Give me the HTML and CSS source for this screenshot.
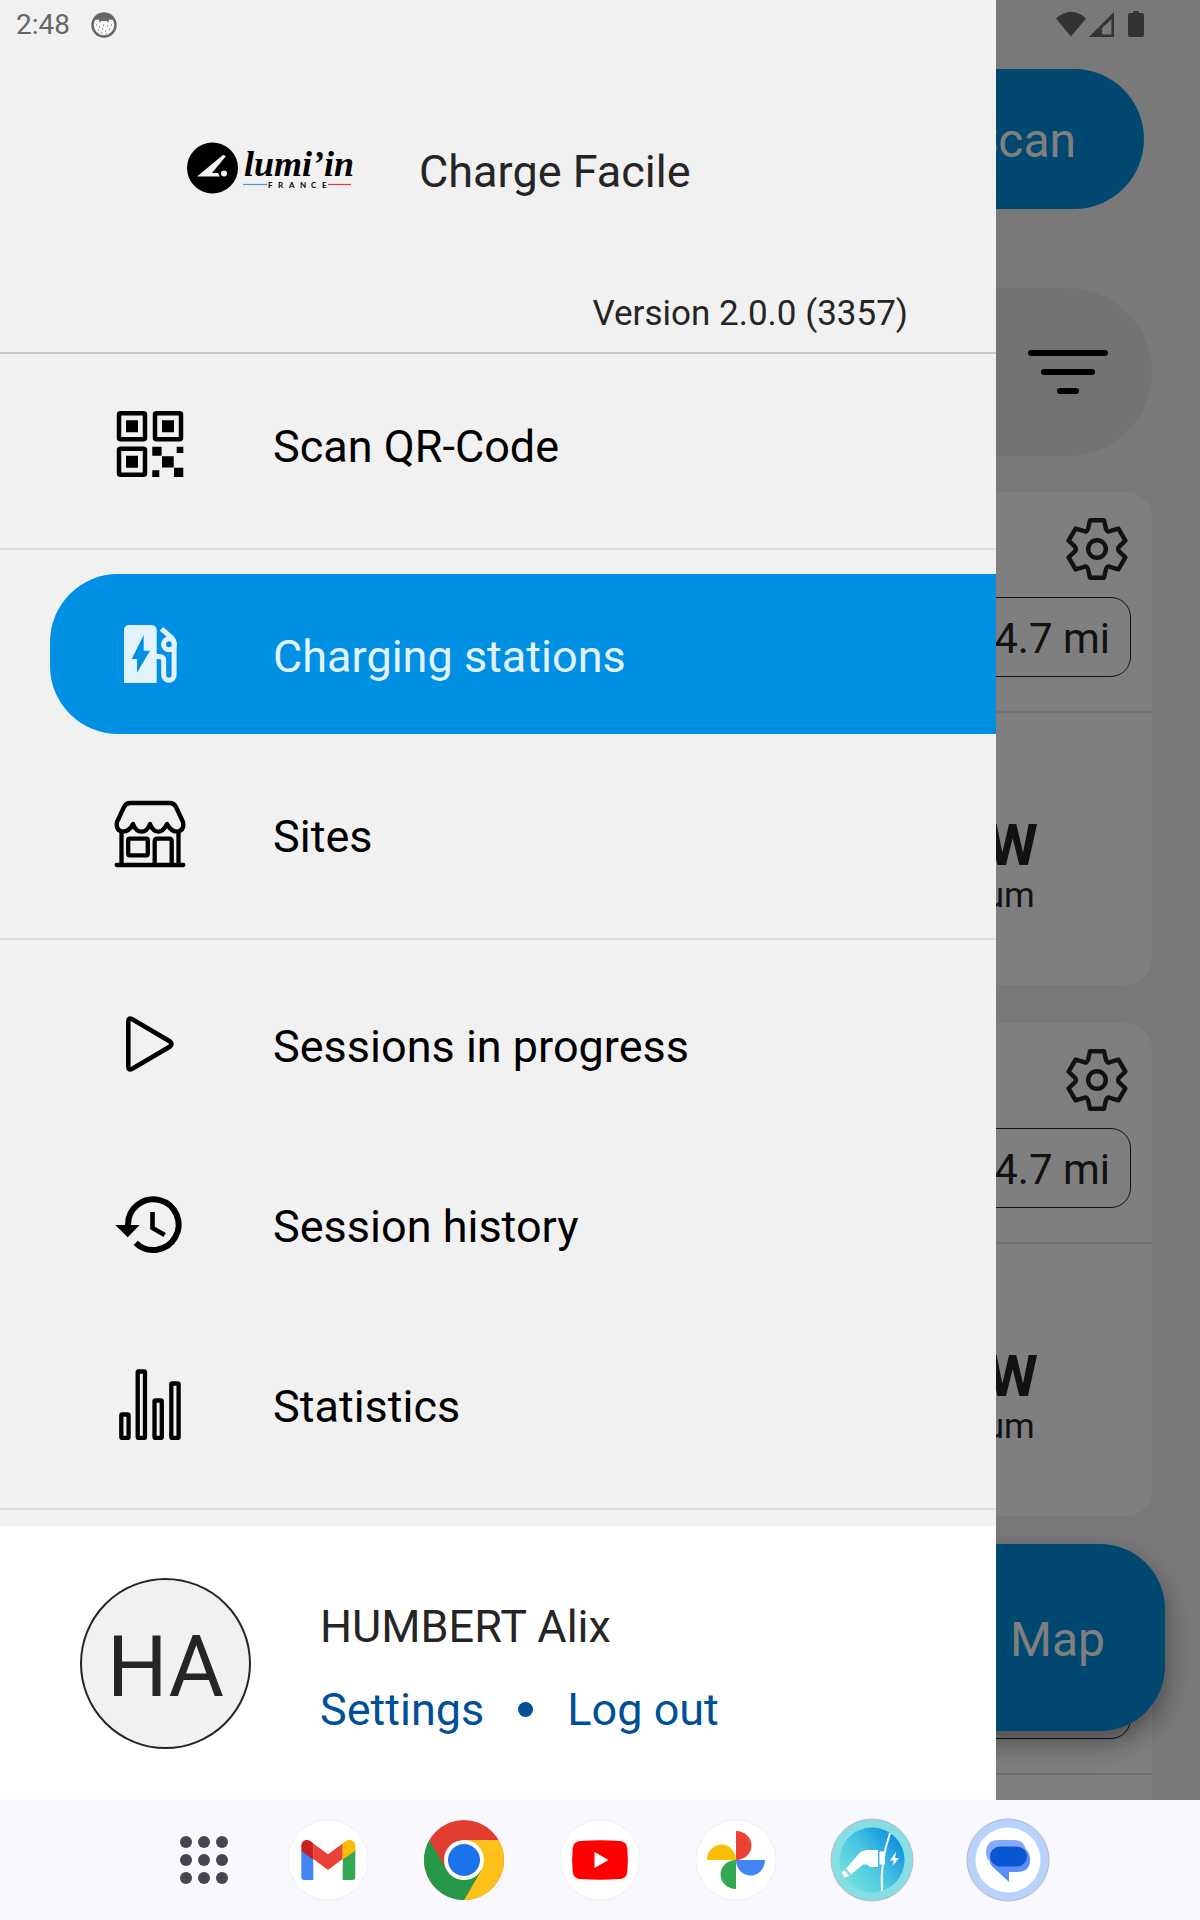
FILE: index.html
```html
<!DOCTYPE html>
<html lang="en">
<head>
  <meta charset="UTF-8">
  <meta name="viewport" content="width=device-width, initial-scale=1.0">
  <title>Charge Facile</title>
  <link rel="stylesheet" href="styles.css">
</head>
<body>

  <!-- shared shapes -->
  <svg class="defs" aria-hidden="true">
    <symbol id="gear" viewBox="-31 -31 62 62">
      <path d="M-7-28.7H7L9-20Q10.5-16.5 12.8-17.8L21.4-20.4 28.4-8.3 21.8-2.2Q20.5 0 21.8 2.2L28.4 8.3 21.4 20.4 12.8 17.8Q10.5 16.5 9 20L7 28.7H-7L-9 20Q-10.5 16.5-12.8 17.8L-21.4 20.4-28.4 8.3-21.8 2.2Q-20.5 0-21.8-2.2L-28.4-8.3-21.4-20.4-12.8-17.8Q-10.5-16.5-9-20Z" fill="none" stroke="currentColor" stroke-width="4.4" stroke-linejoin="round"/>
      <circle r="8.800" fill="none" stroke="currentColor" stroke-width="4.4"/>
    </symbol>
  </svg>

  <div class="screen">

    <main class="page">
      <button class="scan-button">Scan</button>

      <div class="search">
        <button class="filter" aria-label="Filter">
          <svg width="80" height="44" viewBox="0 0 80 44" stroke="#000" stroke-width="6" stroke-linecap="round">
            <path d="M3 3H77M16 22H64M32 41H48"/>
          </svg>
        </button>
      </div>

      <div class="cards">
        <article class="card">
          <div class="card-head">
            <svg class="gear" width="62" height="62"><use href="#gear"/></svg>
            <span class="distance">4.7 mi</span>
          </div>
          <div class="card-body">
            <div class="power"><strong>22 kW</strong><span>Maximum</span></div>
          </div>
        </article>
        <article class="card">
          <div class="card-head">
            <svg class="gear" width="62" height="62"><use href="#gear"/></svg>
            <span class="distance">4.7 mi</span>
          </div>
          <div class="card-body">
            <div class="power"><strong>22 kW</strong><span>Maximum</span></div>
          </div>
        </article>
        <article class="card">
          <div class="card-head">
            <svg class="gear" width="62" height="62"><use href="#gear"/></svg>
            <span class="distance">4.7 mi</span>
          </div>
          <div class="card-body"></div>
        </article>
      </div>

      <button class="map-button">Map</button>
    </main>

    <div class="scrim"></div>

    <aside class="drawer">
      <header class="drawer-header">
        <div class="brand">
          <svg class="logo" width="168" height="52" viewBox="0 0 168 52" role="img" aria-label="lumi'in France">
            <circle cx="25.500" cy="26" r="25.500"/>
            <path d="M36 13 10 34.500H33L31 31H25L39 14Z" fill="#f2f2f2"/>
            <circle cx="37" cy="31.500" r="3" fill="#f2f2f2"/>
            <text x="57" y="34" class="logo-name">lumi’in</text>
            <path d="M56 42.500H80" stroke="#3d9be0" stroke-width="1.200"/>
            <path d="M141 42.500H164" stroke="#e23b3b" stroke-width="1.200"/>
            <text x="81 91 102 113 124 135" y="45.500" class="logo-country">FRANCE</text>
          </svg>
          <h1>Charge Facile</h1>
        </div>
        <p class="version">Version 2.0.0 (3357)</p>
      </header>

      <nav class="menu">
        <div class="group">
          <a class="item" href="#scan">
            <svg viewBox="0 0 72 72">
              <g fill="none" stroke="currentColor" stroke-width="4.500" stroke-linejoin="round">
                <rect x="5" y="5.200" width="26" height="26" rx="1.500"/>
                <rect x="41" y="5.200" width="26" height="26" rx="1.500"/>
                <rect x="5" y="40.800" width="26" height="26" rx="1.500"/>
              </g>
              <path fill="currentColor" d="M12 12.200h12v12H12zM48 12.200h12v12H48zM12 47.800h12v12H12zM38.300 38.700h9.300v9h-9.300zM62.700 38.700h6.600v6.300h-6.600zM48 48.300h11.700v11.300H48zM38.300 62.300h7V69h-7zM60 59.700h9.300V69H60z"/>
            </svg>
            <span>Scan QR-Code</span>
          </a>
        </div>

        <div class="group">
          <a class="item active" href="#stations">
            <svg viewBox="0 0 72 72">
              <path fill="currentColor" fill-rule="evenodd" d="M10 65V12.500Q10 7 15.500 7H37Q42.700 7 42.700 12.500V65ZM29.700 17 17.700 41H23V54.700L36 32.700H29.700Z"/>
              <g fill="none" stroke="currentColor" stroke-width="5">
                <path d="M42 38.500H45.500Q49.700 38.500 49.700 42.500V57a5.200 5.200 0 0 0 10.400 0V26Q60 22 57.500 19.500L47.500 10.800"/>
                <circle cx="55" cy="26.300" r="5.500"/>
              </g>
            </svg>
            <span>Charging stations</span>
          </a>
          <a class="item" href="#sites">
            <svg viewBox="0 0 72 72" fill="none" stroke="currentColor" stroke-width="4.300" stroke-linecap="round" stroke-linejoin="round">
              <path d="M16 5H56Q60 5 62 9L69 24Q70.500 32 64 33.500 57 34 53 26 49 33.700 44.500 33.700 39 33.700 36 26 33 33.700 27.500 33.700 22 33.700 19 26 15 34 8 33.500 1.500 32 3 24L10 9Q12 5 16 5Z"/>
              <path d="M7.500 34V66M64.500 34V66M2.700 67H69.300M40.700 66V43.500Q40.700 40.700 43.500 40.700H55Q57.700 40.700 57.700 43.500V66"/>
              <rect x="14.200" y="40.700" width="19.600" height="16.600" rx="1.500"/>
            </svg>
            <span>Sites</span>
          </a>
        </div>

        <div class="group">
          <a class="item" href="#in-progress">
            <svg viewBox="0 0 72 72" fill="none" stroke="currentColor" stroke-width="4.600">
              <path d="M14.300 13.500V58.500Q14.300 63 18.300 60.700L56 38.500Q59 36 56 33.500L18.300 11.300Q14.300 9 14.300 13.500Z"/>
            </svg>
            <span>Sessions in progress</span>
          </a>
          <a class="item" href="#history">
            <svg viewBox="0 0 72 72" fill="none" stroke="currentColor">
              <path stroke-width="6" d="M14 38V36.700A25.300 25.300 0 1 1 21.700 54.800"/>
              <path stroke-width="4.600" d="M38.500 24V40L50.700 47"/>
              <path fill="currentColor" stroke="none" d="M1.300 37H25.700L13.700 49.300Z"/>
            </svg>
            <span>Session history</span>
          </a>
          <a class="item" href="#statistics">
            <svg viewBox="0 0 72 72" fill="none" stroke="currentColor" stroke-width="4.300">
              <rect x="7.300" y="46.500" width="7.300" height="23.500" rx="1"/>
              <rect x="23.700" y="3.500" width="7.300" height="66.500" rx="1"/>
              <rect x="40.500" y="32.500" width="7.300" height="37.500" rx="1"/>
              <rect x="57.300" y="15.500" width="7.300" height="54.500" rx="1"/>
            </svg>
            <span>Statistics</span>
          </a>
        </div>
      </nav>

      <footer class="account">
        <div class="avatar">HA</div>
        <div class="account-info">
          <p>HUMBERT Alix</p>
          <div class="account-links">
            <a href="#settings">Settings</a>
            <span class="dot"></span>
            <a href="#logout">Log out</a>
          </div>
        </div>
      </footer>
    </aside>

    <div class="status-bar">
      <span>2:48</span>
      <svg width="26" height="26" viewBox="0 0 26 26">
        <circle cx="13" cy="13" r="11.500" fill="#f5f5f5" stroke="#666" stroke-width="2.400"/>
        <path d="M3 8Q7 1 13 1T23 8L18 7.500 17.500 10.500 15.500 9H10.500L8.500 10.500 8 7.500Z" fill="#666"/>
        <path d="M5 13h1M8 15h1M12 13h1M16 14h1M20 13h1M7 18h1M11 17h1M14 19h1M18 17h1M10 21h1M15 22h1" stroke="#666"/>
      </svg>
      <svg class="signals" width="88" height="28" viewBox="0 0 88 28" fill="#333">
        <path d="M0 7.500Q15-6 30 7.500L15 25.500Z"/>
        <path fill-rule="evenodd" d="M33 26 58 1V26ZM46 23.500H55.500V8L46 17Z"/>
        <path d="M77 0H83V2H86Q88 2 88 4V24Q88 26 86 26H74Q72 26 72 24V4Q72 2 74 2H77Z"/>
      </svg>
    </div>
  </div>

  <nav class="taskbar">
    <button class="apps" aria-label="All apps">
      <svg width="48" height="48" viewBox="0 0 48 48" fill="#46464f">
        <circle cx="6" cy="6" r="6"/><circle cx="24" cy="6" r="6"/><circle cx="42" cy="6" r="6"/>
        <circle cx="6" cy="24" r="6"/><circle cx="24" cy="24" r="6"/><circle cx="42" cy="24" r="6"/>
        <circle cx="6" cy="42" r="6"/><circle cx="24" cy="42" r="6"/><circle cx="42" cy="42" r="6"/>
      </svg>
    </button>
    <button aria-label="Gmail">
      <svg viewBox="-42 -42 84 84">
        <circle r="40" fill="#fff" stroke="#f0eef5"/>
        <path d="M-26.700-10-14.700-2V20H-23.500Q-26.700 20-26.700 17Z" fill="#4285f4"/>
        <path d="M27.300-10 14.700-2V20H24Q27.300 20 27.300 17Z" fill="#34a853"/>
        <path d="M-14.700-16.500 0-5.700 14.700-16.500V-1L0 10-14.700-1Z" fill="#ea4335"/>
        <path d="M-14.700-16.500V-.500L-26.700-9.300V-14C-26.700-20-20-22.500-14.700-16.500Z" fill="#c5221f"/>
        <path d="M14.700-16.500V-.500L27.300-9.300V-14C27.300-20 20-22.500 14.700-16.500Z" fill="#fbbc04"/>
      </svg>
    </button>
    <button aria-label="Chrome">
      <svg viewBox="-42 -42 84 84">
        <circle r="40" fill="#e03c31"/>
        <path d="M0-20H34.600A40 40 0 0 1 0 40L17.300 10Z" fill="#fcc21b"/>
        <path d="M-34.600-20-17.300 10 0 20 17.300 10 0 40A40 40 0 0 1-34.600-20Z" fill="#279847"/>
        <circle r="20" fill="#fff"/>
        <circle r="16" fill="#1a73e8"/>
      </svg>
    </button>
    <button aria-label="YouTube">
      <svg viewBox="-42 -42 84 84">
        <circle r="40" fill="#fff" stroke="#f0eef5"/>
        <path d="M-20-19Q0-20.500 20-19 26.500-18.500 27.300-12 28.500 0 27.300 12 26.500 18.500 20 19 0 20.500-20 19-26.500 18.500-27.300 12-28.500 0-27.300-12-26.500-18.500-20-19Z" fill="#f00"/>
        <path d="M-5.500-8V8L8.500 0Z" fill="#fff"/>
      </svg>
    </button>
    <button aria-label="Photos">
      <svg viewBox="-42 -42 84 84">
        <circle r="40" fill="#fff" stroke="#f0eef5"/>
        <path d="M0-29C9-29 15.500-22 15.500-14.500S9 0 0 0Z" fill="#ea4335"/>
        <path d="M0-29C9-29 15.500-22 15.500-14.500S9 0 0 0Z" fill="#4285f4" transform="rotate(90)"/>
        <path d="M0-29C9-29 15.500-22 15.500-14.500S9 0 0 0Z" fill="#34a853" transform="rotate(180)"/>
        <path d="M0-29C9-29 15.500-22 15.500-14.500S9 0 0 0Z" fill="#fbbc04" transform="rotate(270)"/>
      </svg>
    </button>
    <button aria-label="Charge Facile">
      <svg viewBox="-42 -42 84 84">
        <defs>
          <linearGradient id="sky" x1="0.100" y1="0.800" x2="0.900" y2="0.150">
            <stop offset="0" stop-color="#6fe0dc"/>
            <stop offset="0.500" stop-color="#45c3e2"/>
            <stop offset="1" stop-color="#0b8fe0"/>
          </linearGradient>
        </defs>
        <circle r="41" fill="#87dde4" stroke="#b9b9c4"/>
        <circle r="32.500" fill="url(#sky)"/>
        <path d="M18-27Q8 2 10 31" fill="none" stroke="#fff" stroke-width="2"/>
        <path d="M-26 8.500-12-7.500Q-9-10-5-10H6V7H-2L-5 4.500H-9L-21 14.500ZM7.500-8.500H13V4.500H7.500ZM-27.500 10-22.500 16-28 17.500-30 12Z" fill="#fff"/>
        <path d="M24-8 18 .500H22L20.500 6 27-2H23Z" fill="#fff"/>
      </svg>
    </button>
    <button aria-label="Messages">
      <svg viewBox="-42 -42 84 84">
        <circle r="41" fill="#b7d3fb" stroke="#b9b9c4"/>
        <circle r="32.500" fill="#fff"/>
        <path d="M-9-20H6Q16-20 18-10L-15 4Q-22 0-22-7-22-20-9-20Z" fill="#87a9fb"/>
        <path d="M-18 1Q-17-13-5-13H8Q22-13 22 0 22 12 9 12H1V22L-14 8Q-18 5-18 1Z" fill="#5c8df8"/>
        <rect x="-18" y="-13.500" width="37" height="20" rx="10" fill="#0957d0"/>
      </svg>
    </button>
  </nav>

</body>
</html>
```
FILE: styles.css
```css
* {
  box-sizing: border-box;
}

body {
  margin: 0;
  height: 100vh;
  display: flex;
  flex-direction: column;
  overflow: hidden;
  font-family: Roboto, sans-serif;
  font-size: 45px;
  line-height: 52px;
  color: #252525;
}

h1, p {
  margin: 0;
  font-size: inherit;
  font-weight: 400;
}

a {
  text-decoration: none;
}

button {
  border: none;
  padding: 0;
  background: none;
  font: inherit;
  cursor: pointer;
}

svg {
  display: block;
  flex: none;
}

.defs {
  position: absolute;
  width: 0;
  height: 0;
}

.screen {
  position: relative;
  flex: 1;
  min-height: 0;
  overflow: hidden;
}

/* page behind the drawer */
.page {
  height: 100%;
  padding: 69px 48px 0;
  background: #f2f2f2;
  display: flex;
  flex-direction: column;
}

.scan-button {
  align-self: flex-end;
  flex: none;
  height: 140px;
  margin-right: 8px;
  padding: 4px 68px 0 140px;
  border-radius: 70px;
  background: #0090df;
  color: #fff;
  font-size: 48px;
}

.search {
  flex: none;
  height: 168px;
  margin: 79px 0 36px;
  padding: 0 44px;
  border-radius: 84px;
  background: #e6e6e6;
  display: flex;
  align-items: center;
  justify-content: flex-end;
}

.cards {
  display: flex;
  flex-direction: column;
  gap: 38px;
}

.card {
  border-radius: 26px;
  background: #fff;
}

.card-head {
  display: flex;
  flex-direction: column;
  align-items: flex-end;
  gap: 17px;
  padding: 26px 21px 34px;
  border-bottom: 2px solid #e0e0e0;
}

.gear {
  margin-right: 3px;
}

.distance {
  padding: 15px 20px 11px;
  border: 1px solid #252525;
  border-radius: 20px;
  font-size: 42px;
}

.card-body {
  height: 272px;
  padding: 32px 114px 0;
  display: flex;
  align-items: center;
  justify-content: flex-end;
}

.power {
  display: flex;
  flex-direction: column;
  align-items: center;
  font-size: 35px;
  line-height: 40px;
}

.power strong {
  font-size: 58px;
  line-height: 62px;
}

.map-button {
  position: absolute;
  right: 35px;
  bottom: 69px;
  height: 187px;
  padding: 4px 60px 0 140px;
  border-radius: 65px;
  background: #0090df;
  color: #fff;
  font-size: 48px;
  box-shadow: 0 12px 28px rgba(0, 0, 0, 0.4);
}

.scrim {
  position: absolute;
  inset: 0;
  background: rgba(0, 0, 0, 0.5);
}

/* drawer */
.drawer {
  position: absolute;
  top: 0;
  bottom: 0;
  left: 0;
  width: 83%;
  background: #f1f1f1;
  display: flex;
  flex-direction: column;
}

.drawer-header {
  padding: 142px 88px 12px 187px;
  border-bottom: 2px solid #c8c8c8;
}

.brand {
  display: flex;
  align-items: center;
  gap: 64px;
}

.brand h1 {
  padding-top: 4px;
  margin-bottom: -4px;
}

.logo {
  overflow: visible;
}

.logo-name {
  font: italic bold 36px "Liberation Serif", serif;
}

.logo-country {
  font: bold 8px Lato, sans-serif;
}

.version {
  margin-top: 94px;
  text-align: right;
  font-size: 35px;
}

.menu {
  flex: 1;
  min-height: 0;
}

.group {
  display: flex;
  flex-direction: column;
  gap: 20px;
  padding: 24px 0;
  border-bottom: 2px solid #dedede;
}

.group:first-child {
  padding-top: 10px;
}

.item {
  display: flex;
  align-items: center;
  gap: 87px;
  height: 160px;
  margin-left: 50px;
  padding-left: 64px;
  border-radius: 68px 0 0 68px;
  color: #000;
}

.item svg {
  width: 72px;
  height: 72px;
}

.item span {
  padding-top: 6px;
}

.item.active {
  background: #0090e3;
  color: #e3f3fd;
}

.account {
  display: flex;
  align-items: center;
  gap: 69px;
  height: 274px;
  padding-left: 80px;
  background: #fff;
}

.avatar {
  width: 171px;
  height: 171px;
  border: 2px solid #252525;
  border-radius: 50%;
  background: #f1f1f1;
  display: flex;
  align-items: center;
  justify-content: center;
  padding-top: 8px;
  font-size: 85px;
}

.account-info {
  display: flex;
  flex-direction: column;
  gap: 31px;
  padding-top: 10px;
}

.account-links {
  display: flex;
  align-items: center;
  gap: 34px;
}

.account-links a {
  color: #005096;
}

.dot {
  width: 15px;
  height: 15px;
  border-radius: 50%;
  background: #005096;
}

.status-bar {
  position: absolute;
  top: 0;
  left: 0;
  right: 0;
  display: flex;
  align-items: center;
  gap: 21px;
  height: 50px;
  padding: 0 56px 0 16px;
  font-size: 28px;
  color: #666;
}

.signals {
  margin-left: auto;
}

/* taskbar */
.taskbar {
  flex: none;
  height: 120px;
  padding-left: 24px;
  background: #faf8ff;
  display: flex;
  align-items: center;
  justify-content: center;
  gap: 52px;
}

.taskbar button svg {
  width: 84px;
}

.taskbar .apps {
  padding: 0 6px;
}

.taskbar .apps svg {
  width: 48px;
}
```
